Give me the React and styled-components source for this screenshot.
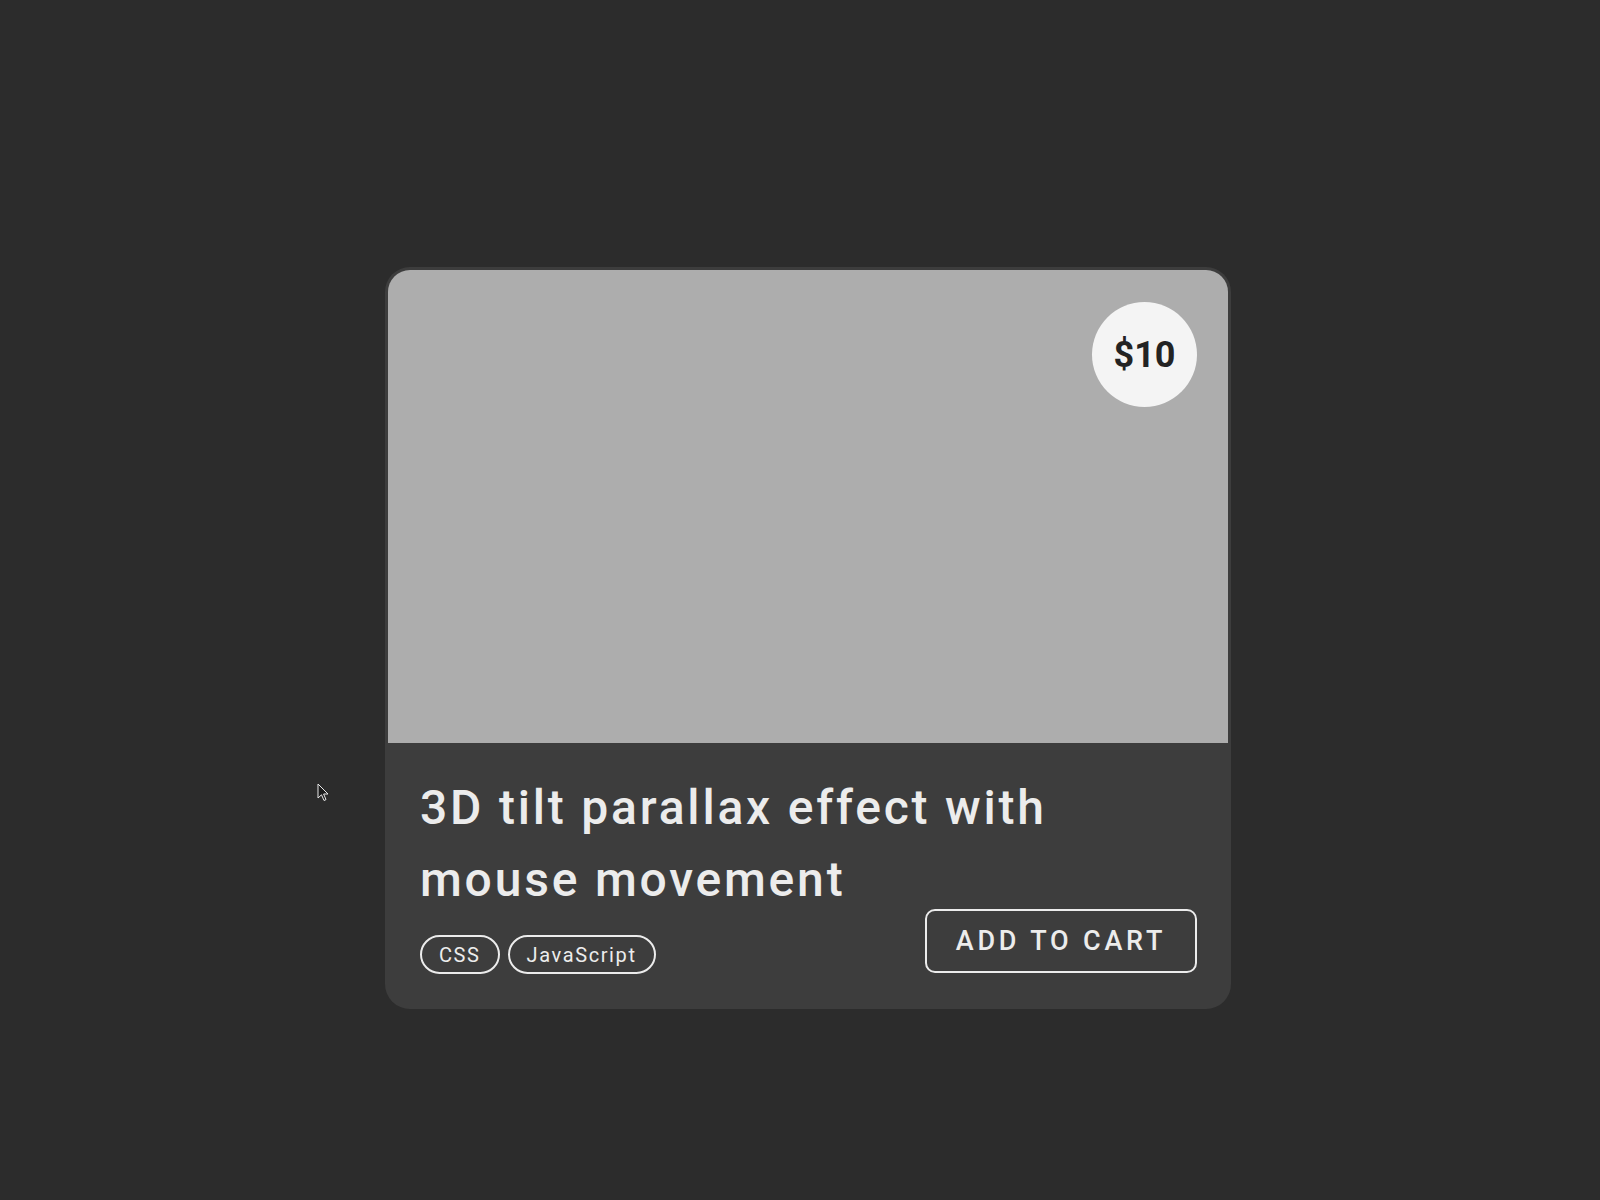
import styled, { createGlobalStyle } from 'styled-components'

const GlobalStyle = createGlobalStyle`
  html, body {
    margin: 0;
    padding: 0;
    background: #2c2c2c;
    font-family: Roboto, "Liberation Sans", sans-serif;
  }
`

const tags = ['CSS', 'JavaScript']

export default function App() {
  return (
    <Page>
      <GlobalStyle />
      <Card>
        <Cover>
          <Price>$10</Price>
        </Cover>
        <Body>
          <Title>3D tilt parallax effect with mouse movement</Title>
          <Footer>
            <TagList>
              {tags.map((tag) => (
                <Tag key={tag}>{tag}</Tag>
              ))}
            </TagList>
            <CartButton>Add to cart</CartButton>
          </Footer>
        </Body>
      </Card>
      <Cursor viewBox="0 0 12 19">
        <path d="M1 1 L1 15 L4.5 11.8 L7 17.5 L9 16.6 L6.6 11 L11 11 Z" fill="#1c1c1c" stroke="#e8e8e8" strokeWidth="1" strokeLinejoin="round" />
      </Cursor>
    </Page>
  )
}

const Page = styled.div`
  position: relative;
  min-height: 100vh;
  box-sizing: border-box;
  display: flex;
  justify-content: center;
  align-items: flex-start;
  padding: 267px 0 0 16px;
`

const Card = styled.div`
  width: 846px;
  box-sizing: border-box;
  padding: 3px 3px 0;
  border-radius: 25px;
  background: #3d3d3d;
  overflow: hidden;
`

const Cover = styled.div`
  position: relative;
  height: 473px;
  background: #adadad;
  border-radius: 22px 22px 0 0;
`

const Price = styled.div`
  position: absolute;
  top: 32px;
  right: 31px;
  width: 105px;
  height: 105px;
  border-radius: 50%;
  background: #f4f4f4;
  color: #232323;
  display: flex;
  align-items: center;
  justify-content: center;
  font-size: 36px;
  font-weight: 700;
`

const Body = styled.div`
  padding: 29px 31px 36px 32px;
`

const Title = styled.h2`
  margin: 0 0 -7px;
  max-width: 720px;
  color: #ececec;
  font-size: 48px;
  font-weight: 500;
  line-height: 72px;
  letter-spacing: 2.8px;
`

const Footer = styled.div`
  display: flex;
  justify-content: space-between;
  align-items: flex-end;
`

const TagList = styled.div`
  display: flex;
  gap: 8px;
  margin-bottom: -1px;
`

const Tag = styled.span`
  height: 39px;
  box-sizing: border-box;
  padding: 0 17px;
  display: inline-flex;
  align-items: center;
  border: 2px solid #ececec;
  border-radius: 20px;
  color: #ececec;
  font-size: 20px;
  letter-spacing: 1.6px;
`

const CartButton = styled.button`
  width: 272px;
  height: 64px;
  border: 2px solid #ececec;
  border-radius: 10px;
  background: transparent;
  color: #ececec;
  font-family: inherit;
  font-size: 27px;
  font-weight: 500;
  letter-spacing: 3.8px;
  text-transform: uppercase;
`

const Cursor = styled.svg`
  position: absolute;
  left: 317px;
  top: 783px;
  width: 12px;
  height: 19px;
`
